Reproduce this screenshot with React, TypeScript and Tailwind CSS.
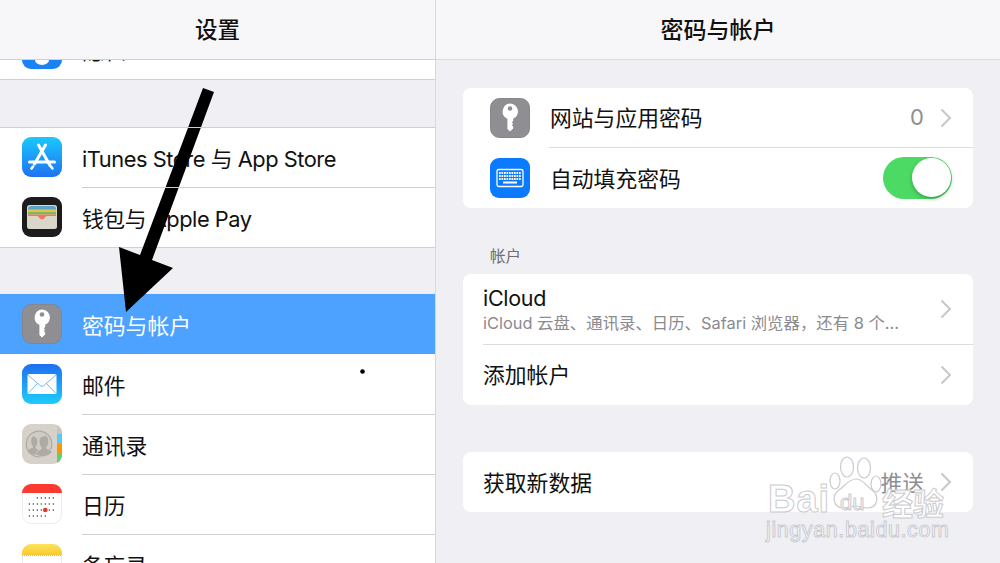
import type { ReactNode } from "react";

const fontStack = "font-['Inter','Noto_Sans_CJK_SC',sans-serif]";

function KeyIcon() {
  return (
    <svg width="40" height="40" viewBox="0 0 40 40" className="shrink-0">
      <rect x="0.5" y="0.5" width="39" height="39" rx="9" fill="#8e8e93" stroke="#85858a" />
      <path
        d="M20 5.5a8 8 0 0 1 3.2 15.3V23l-1.4 1.3 1.4 1.4-1.4 1.3 1.4 1.4v2l-3.2 3.2-2.6-2.6V20.8A8 8 0 0 1 20 5.5z"
        fill="#fff"
      />
      <circle cx="20" cy="10.5" r="2.3" fill="#8e8e93" />
    </svg>
  );
}

function AppStoreIcon() {
  return (
    <svg width="40" height="40" viewBox="0 0 40 40" className="shrink-0">
      <defs>
        <linearGradient id="appstore" x1="0" y1="0" x2="0" y2="1">
          <stop offset="0" stopColor="#1bc8fc" />
          <stop offset="1" stopColor="#1e72f2" />
        </linearGradient>
      </defs>
      <rect width="40" height="40" rx="9" fill="url(#appstore)" />
      <g stroke="#fff" strokeWidth="3" strokeLinecap="round" fill="none">
        <path d="M23.5 8 12.5 27" />
        <path d="M16.5 8 28 28.5" />
        <path d="M7.5 25h25" />
        <path d="M11 29.5l-1.5 2" strokeWidth="2.6" />
        <path d="M29 29.5l1.5 2" strokeWidth="2.6" />
      </g>
    </svg>
  );
}

function WalletIcon() {
  return (
    <svg width="40" height="40" viewBox="0 0 40 40" className="shrink-0">
      <rect width="40" height="40" rx="9" fill="#1c1c1e" />
      <rect x="5" y="8" width="30" height="24" rx="2.5" fill="#dad6ca" />
      <path d="M6 12a3 3 0 0 1 3-3h22a3 3 0 0 1 3 3v1H6z" fill="#5aa5c8" />
      <rect x="6" y="12.5" width="28" height="2.5" fill="#e3c24e" />
      <rect x="6" y="15" width="28" height="2.5" fill="#7fb95c" />
      <path d="M6 17.5h28V19h-9c-1 0-1.6 1-2.2 1.8-.7 1-1.6 1.6-2.8 1.6s-2.1-.6-2.8-1.6C16.6 20 16 19 15 19H6z" fill="#ee7a62" />
    </svg>
  );
}

function MailIcon() {
  return (
    <svg width="40" height="40" viewBox="0 0 40 40" className="shrink-0">
      <defs>
        <linearGradient id="mail" x1="0" y1="0" x2="0" y2="1">
          <stop offset="0" stopColor="#1d6ff0" />
          <stop offset="1" stopColor="#1ecdfc" />
        </linearGradient>
      </defs>
      <rect width="40" height="40" rx="9" fill="url(#mail)" />
      <rect x="5.5" y="10" width="29" height="20" rx="1.5" fill="#fff" />
      <path d="M6 11l12 10.5c1.2 1 2.8 1 4 0L34 11M6 29.5 16 19M34 29.5 24 19" fill="none" stroke="#5fb4f6" strokeWidth="0.9" />
    </svg>
  );
}

function ContactsIcon() {
  return (
    <svg width="40" height="40" viewBox="0 0 40 40" className="shrink-0">
      <defs>
        <clipPath id="contactsClip">
          <rect width="40" height="40" rx="9" />
        </clipPath>
      </defs>
      <g clipPath="url(#contactsClip)">
        <rect width="40" height="40" fill="#d6d2ca" />
        <rect x="35" y="0" width="5" height="10" fill="#c9c5bd" />
        <rect x="35" y="10" width="5" height="10" fill="#5ac8fa" />
        <rect x="35" y="20" width="5" height="10" fill="#ff9500" />
        <rect x="35" y="30" width="5" height="10" fill="#5fd068" />
      </g>
      <circle cx="17" cy="20" r="12.8" fill="#d0ccc5" stroke="#aeaaa4" strokeWidth="1.2" />
      <path d="M11 12.5c3 0 4.5 2.5 4.3 5.5-.1 2-.8 3.5-1.8 4.5V24l3.5 2.5v3l-4 1.5-7-2.5c-.5-2 .5-3.500 5-5V22c-1-1-1.700-2.500-1.800-4.300-.2-3 .8-5.200 1.800-5.200z" fill="#aeaaa4" />
      <path d="M22 11.500c3.200 0 5 2.800 4.700 6.500-.2 2.200-.9 3.800-2 4.800v1.700c3.200 1 4.800 2.200 5 4-2.500 2.800-6 4.200-9.700 4-2.200 0-4.300-.7-6-2 .2-2.200 2-4 5.200-5.500v-1.700c-1.100-1-1.800-2.600-2-4.800-.3-3.700 1.500-6.500 4.800-6.500z" fill="#aeaaa4" stroke="#d0ccc5" strokeWidth="0.8" />
    </svg>
  );
}

const calendarRows = [
  { y: 14, xs: [15.3, 19.3, 23.3, 27.3, 31.3] },
  { y: 20, xs: [7.3, 11.3, 15.3, 19.3, 23.3, 27.3, 31.3] },
  { y: 26, xs: [7.3, 11.3, 15.3, 19.3, 27.3, 31.3] },
  { y: 32, xs: [7.3, 11.3, 15.3, 19.3, 23.3] },
];

function CalendarIcon() {
  return (
    <svg width="40" height="40" viewBox="0 0 40 40" className="shrink-0">
      <rect x="0.5" y="0.5" width="39" height="39" rx="9" fill="#fff" stroke="#ececee" />
      <path d="M0 9a9 9 0 0 1 9-9h22a9 9 0 0 1 9 9H0z" fill="#fb3a30" />
      {calendarRows.map((row) =>
        row.xs.map((x) => <circle key={`${x}-${row.y}`} cx={x} cy={row.y} r="0.7" fill="#333" />),
      )}
      <circle cx="23.3" cy="26" r="2.3" fill="#e8352c" />
    </svg>
  );
}

function NotesIcon() {
  return (
    <svg width="40" height="40" viewBox="0 0 40 40" className="shrink-0">
      <defs>
        <linearGradient id="notes" x1="0" y1="0" x2="0" y2="1">
          <stop offset="0" stopColor="#fee35a" />
          <stop offset="1" stopColor="#fbc92f" />
        </linearGradient>
      </defs>
      <rect x="0.5" y="0.5" width="39" height="39" rx="9" fill="#fff" stroke="#ececee" />
      <path d="M0 11V9a9 9 0 0 1 9-9h22a9 9 0 0 1 9 9v2H0z" fill="url(#notes)" />
      <path d="M0 11.5h40" stroke="#b5b5b5" strokeWidth="1" strokeDasharray="1 1" />
    </svg>
  );
}

function PrivacyIcon() {
  return (
    <svg width="40" height="40" viewBox="0 0 40 40" className="shrink-0">
      <rect width="40" height="40" rx="9" fill="#1b82f5" />
      <ellipse cx="20" cy="31" rx="7" ry="5" fill="#fff" />
    </svg>
  );
}

function KeyboardIcon() {
  const keys = [];
  for (let row = 0; row < 3; row++) {
    for (let col = 0; col < 9; col++) {
      keys.push(<rect key={`${row}-${col}`} x={9 + col * 2.5} y={14 + row * 3} width="1.7" height="2" fill="#fff" />);
    }
  }
  return (
    <svg width="40" height="40" viewBox="0 0 40 40" className="shrink-0">
      <rect width="40" height="40" rx="9" fill="#0a7bff" />
      <rect x="7" y="11.5" width="26" height="17" rx="1.8" fill="none" stroke="#fff" strokeWidth="1.3" />
      {keys}
      <rect x="13" y="23.5" width="14" height="2" fill="#fff" />
    </svg>
  );
}

function Chevron() {
  return (
    <svg width="12" height="20" viewBox="0 0 12 20" className="shrink-0">
      <path d="M1.5 1.5 10 10l-8.5 8.5" fill="none" stroke="#c7c7cc" strokeWidth="2" />
    </svg>
  );
}

function SideRow({
  icon,
  label,
  active,
  last,
  latin,
}: {
  icon: ReactNode;
  label: string;
  active?: boolean;
  last?: boolean;
  latin?: boolean;
}) {
  return (
    <div className={`relative flex h-[60px] items-center gap-5 pl-[22px] ${active ? "bg-[#4da1ff] text-white" : "bg-white text-[#111]"}`}>
      {icon}
      <span className={`pt-1 text-[21.8px] font-normal whitespace-nowrap ${latin ? "tracking-[-0.45px]" : ""}`}>{label}</span>
      {!last && !active && <div className="absolute right-0 -bottom-px left-[82px] z-10 h-px bg-[#cfcfd3]" />}
    </div>
  );
}

function Sidebar() {
  return (
    <aside className="flex h-full w-[436px] shrink-0 flex-col overflow-hidden border-r border-[#d8d8dc] bg-[#efeff4]">
      <header className="relative z-20 flex h-[60px] shrink-0 items-center justify-center border-b border-[#d0d0d4] bg-[#f7f7f9] text-[22.5px] font-medium text-[#111]">
        设置
      </header>
      <div className="-mt-[41px]">
        <div className="border-b border-[#d0d0d4]">
          <SideRow icon={<PrivacyIcon />} label="隐私" last />
        </div>
        <div className="h-[47px]" />
        <div className="relative border-b border-[#d0d0d4]">
          <div className="absolute inset-x-0 top-0 z-10 h-px bg-[#d0d0d4]" />
          <SideRow icon={<AppStoreIcon />} label="iTunes Store 与 App Store" latin />
          <SideRow icon={<WalletIcon />} label="钱包与 Apple Pay" last latin />
        </div>
        <div className="h-[46px]" />
        <SideRow icon={<KeyIcon />} label="密码与帐户" active />
        <SideRow icon={<MailIcon />} label="邮件" />
        <SideRow icon={<ContactsIcon />} label="通讯录" />
        <SideRow icon={<CalendarIcon />} label="日历" />
        <SideRow icon={<NotesIcon />} label="备忘录" last />
      </div>
    </aside>
  );
}

function Detail() {
  return (
    <section className="flex h-full flex-1 flex-col bg-[#efeff4]">
      <header className="flex h-[60px] shrink-0 items-center justify-center border-b border-[#dcdce0] bg-[#f7f7f9] pt-px text-[23px] font-medium text-[#111]">
        密码与帐户
      </header>
      <div className="flex flex-col px-[27px] pt-7">
        <div className="overflow-hidden rounded-lg bg-white">
          <div className="flex h-[59px] items-center pr-[21px] pl-[27px]">
            <KeyIcon />
            <span className="ml-5 flex-1 pt-0.5 text-[21.8px] text-[#111]">网站与应用密码</span>
            <span className="mr-4 text-[22px] text-[#8e8e93]">0</span>
            <Chevron />
          </div>
          <div className="ml-[86px] h-px bg-[#dcdce0]" />
          <div className="flex h-[60px] items-center pr-[21px] pb-px pl-[27px]">
            <KeyboardIcon />
            <span className="ml-5 flex-1 pt-1 text-[21.8px] text-[#111]">自动填充密码</span>
            <div className="flex h-[42px] w-[69px] items-center justify-end rounded-full bg-[#4cd964] pr-px">
              <div className="h-[39px] w-[39px] rounded-full bg-white shadow-[0_2px_4px_rgba(0,0,0,0.25)]" />
            </div>
          </div>
        </div>

        <div className="mt-10 mb-2 pl-[27px] text-[15.5px] leading-[18px] text-[#6d6d72]">帐户</div>

        <div className="overflow-hidden rounded-lg bg-white">
          <div className="flex h-[70px] items-center pr-[21px] pl-5">
            <div className="flex-1 pt-1">
              <div className="text-[21.5px] leading-[25px] tracking-[-0.3px] text-[#111]">iCloud</div>
              <div className="text-[16.4px] leading-[25px] whitespace-nowrap text-[#8a8a8f]">iCloud 云盘、通讯录、日历、Safari 浏览器，还有 8 个...</div>
            </div>
            <Chevron />
          </div>
          <div className="ml-5 h-px bg-[#dcdce0]" />
          <div className="flex h-[60px] items-center pr-[21px] pl-5">
            <span className="flex-1 text-[21.8px] text-[#111]">添加帐户</span>
            <Chevron />
          </div>
        </div>

        <div className="mt-[47px] flex h-[60px] items-center rounded-lg bg-white pr-[21px] pl-5">
          <span className="flex-1 pt-0.5 text-[21.8px] text-[#111]">获取新数据</span>
          <span className="mr-4 pt-0.5 text-[21.8px] text-[#8e8e93]">推送</span>
          <Chevron />
        </div>
      </div>
    </section>
  );
}

function Annotations() {
  return (
    <svg width="1000" height="563" viewBox="0 0 1000 563" className="pointer-events-none absolute top-0 left-0">
      <path d="M203 88l11 4-62 168 21 8-47 44-7-65 21 8z" fill="#000" />
      <circle cx="362.5" cy="371.5" r="2.3" fill="#000" />
    </svg>
  );
}

function Watermark() {
  const outline = "text-white/85 [-webkit-text-stroke:1px_#cbcbd0]";
  return (
    <div className="pointer-events-none absolute top-[455px] left-[766px] h-[90px] w-[182px] font-['Liberation_Sans',sans-serif]">
      <svg width="54" height="54" viewBox="0 0 54 54" className="absolute top-0 left-[63px]">
        <g fill="rgba(255,255,255,0.8)" stroke="#cbcbd0" strokeWidth="1.2">
          <ellipse cx="18" cy="12" rx="6.5" ry="10" />
          <ellipse cx="35" cy="13" rx="6.5" ry="10" />
          <ellipse cx="6" cy="26" rx="5" ry="8" />
          <ellipse cx="47" cy="29" rx="5" ry="8" />
          <path d="M27 24c7 0 9 6 16 11 8 6 6 18-5 18-5 0-7-2-11-2s-7 2-12 2C4 53 2 41 10 35c7-5 10-11 17-11z" />
        </g>
      </svg>
      <span className={`absolute top-[22px] left-[2px] text-[38px] leading-[44px] font-bold tracking-[1px] ${outline}`}>Bai</span>
      <span className={`absolute top-[36px] left-[74px] text-[22px] leading-[24px] ${outline}`}>du</span>
      <span className={`absolute top-[28px] left-[116px] font-['Noto_Sans_CJK_SC',sans-serif] text-[31px] leading-[38px] font-bold ${outline}`}>经验</span>
      <span className={`absolute top-[62px] left-0 text-[21.5px] leading-[26px] tracking-[0.6px] whitespace-nowrap ${outline}`}>jingyan.baidu.com</span>
    </div>
  );
}

export default function App() {
  return (
    <div className={`relative flex h-[563px] w-[1000px] overflow-hidden ${fontStack}`}>
      <Sidebar />
      <Detail />
      <Annotations />
      <Watermark />
    </div>
  );
}
